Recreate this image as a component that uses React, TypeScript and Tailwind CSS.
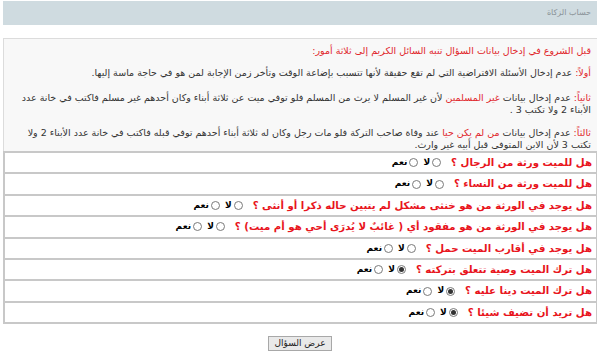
const questions: { text: string; checked: boolean }[] = [
  { text: 'هل للميت ورثة من الرجال ؟', checked: false },
  { text: 'هل للميت ورثة من النساء ؟', checked: false },
  { text: 'هل يوجد في الورثة من هو خنثى مشكل لم يتبين حاله ذكرا أو أنثى ؟', checked: false },
  { text: 'هل يوجد في الورثة من هو مفقود  أي ( غائبٌ لا يُدرَى أحي هو أم ميت) ؟', checked: false },
  { text: 'هل يوجد في أقارب الميت حمل ؟', checked: false },
  { text: 'هل ترك الميت وصية تتعلق بتركته ؟', checked: true },
  { text: 'هل ترك الميت دينا عليه ؟', checked: true },
  { text: 'هل تريد أن تضيف شيئا ؟', checked: true },
];

function Radio({ on }: { on: boolean }) {
  return (
    <span className="inline-flex w-[9px] h-[9px] rounded-full border border-[#7a7a7a] bg-white items-center justify-center">
      {on && <span className="w-[5px] h-[5px] rounded-full bg-[#333]" />}
    </span>
  );
}

function Red({ children }: { children: React.ReactNode }) {
  return <span className="inline-block leading-[12px] text-[#e0262b]">{children}</span>;
}

export default function App() {
  return (
    <div dir="rtl" className="w-[600px] h-[357px] bg-white font-['DejaVu_Sans',sans-serif] overflow-hidden">
      {/* Header */}
      <div className="mx-[3px] mt-[1px] h-[24px] bg-[#cfdbe0] flex items-center px-[6px]">
        <span className="text-[8px] text-[#8a9297]">حساب الزكاة</span>
      </div>

      {/* Notes */}
      <div className="mt-[13px] mx-[3px] border-t border-l border-[#dcdcdc] bg-[#f8f8f8] px-[6px] pt-[6px] pb-0 text-[9.5px] leading-[12px] text-[#333]">
        <p className="text-[#e0262b] mb-[10px]">قبل الشروع في إدخال بيانات السؤال تنبه السائل الكريم إلى ثلاثة أمور:</p>
        <p className="mb-[13px]">
          <Red>أولاً:</Red> عدم إدخال الأسئلة الافتراضية التي لم تقع حقيقة لأنها تتسبب بإضاعة الوقت وتأخر زمن الإجابة لمن هو في حاجة ماسة إليها.
        </p>
        <p className="mb-[11px]">
          <Red>ثانياً:</Red> عدم إدخال بيانات <Red>غير المسلمين</Red> لأن غير المسلم لا يرث من المسلم فلو توفي ميت عن ثلاثة أبناء وكان أحدهم غير مسلم فاكتب في خانة عدد الأبناء 2 ولا تكتب 3 .
        </p>
        <p>
          <Red>ثالثاً:</Red> عدم إدخال بيانات <Red>من لم يكن حيا</Red> عند وفاة صاحب التركة  فلو مات رجل وكان له ثلاثة أبناء أحدهم توفي قبله فاكتب في خانة عدد الأبناء 2 ولا تكتب 3 لأن الابن المتوفى قبل أبيه غير وارث.
        </p>
      </div>

      {/* Questions */}
      <div className="mx-[3px] border-t-2 border-l-2 border-r border-[#c8c8c8]">
        {questions.map((q, i) => (
          <div key={i} className="h-[21.4px] border-b-2 border-[#c8c8c8] bg-white flex items-center px-[4px] gap-[10px]">
            <span className="text-[10.2px] font-bold text-[#e8141c] whitespace-nowrap">{q.text}</span>
            <span className="flex items-center gap-[2px] text-[9px] font-bold text-black">
              <Radio on={q.checked} />
              <span className="ml-[3px]">لا</span>
              <Radio on={false} />
              <span>نعم</span>
            </span>
          </div>
        ))}
      </div>

      <div className="flex justify-center mt-[12px]">
        <button className="h-[15px] w-[64px] border border-[#a8a8a8] bg-[#e9e9e9] text-[9px] text-[#222] leading-none">
          عرض السؤال
        </button>
      </div>
    </div>
  );
}
